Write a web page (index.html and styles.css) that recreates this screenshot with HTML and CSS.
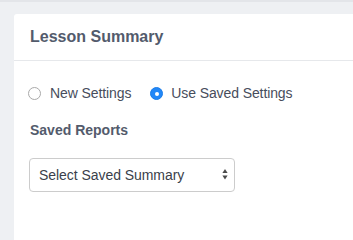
FILE: index.html
```html
<!DOCTYPE html>
<html>
<head>
<meta charset="utf-8">
<link rel="stylesheet" href="styles.css">
</head>
<body>
<div class="topbar"></div>
<div class="card">
  <div class="card-header">
    <h2 class="card-title">Lesson Summary</h2>
  </div>
  <div class="card-body">
    <div class="radio-row">
      <label class="radio-option">
        <span class="radio"></span>
        <span class="radio-label">New Settings</span>
      </label>
      <label class="radio-option">
        <span class="radio radio-checked"></span>
        <span class="radio-label">Use Saved Settings</span>
      </label>
    </div>
    <div class="field-label">Saved Reports</div>
    <div class="select-wrap">
      <div class="select">Select Saved Summary</div>
      <svg class="select-arrows" width="6" height="11" viewBox="0 0 6 11">
        <path d="M3 0 L5.6 4 L0.4 4 Z" fill="#4a4a4a"/>
        <path d="M3 10.5 L5.6 6.5 L0.4 6.5 Z" fill="#4a4a4a"/>
      </svg>
    </div>
  </div>
</div>
</body>
</html>
```

FILE: styles.css
```css
html, body {
  margin: 0;
  padding: 0;
  background: #eef0f3;
  font-family: "Liberation Sans", Arial, sans-serif;
}

html {
  overflow: hidden;
}

.topbar {
  height: 2px;
  background: #e3e5e9;
}

.card {
  margin: 12px 0 0 14px;
  background: #ffffff;
  border-top-left-radius: 3px;
  height: calc(100vh - 14px);
  min-height: 198px;
}

.card-header {
  height: 46px;
  border-bottom: 1px solid #e6e8eb;
  padding-left: 16px;
  display: flex;
  align-items: center;
}

.card-title {
  margin: 0;
  font-size: 16px;
  font-weight: bold;
  line-height: 46px;
  color: #535b6c;
}

.card-body {
  padding: 22px 0 0 16px;
}

.radio-row {
  display: flex;
  align-items: center;
  height: 20px;
}

.radio-option {
  display: flex;
  align-items: center;
  margin-right: 19px;
  font-size: 14px;
  line-height: 20px;
  color: #474d5c;
  letter-spacing: -0.1px;
}

.radio {
  box-sizing: border-box;
  width: 13px;
  height: 13px;
  border-radius: 50%;
  border: 1px solid #a9a9a9;
  background: #ffffff;
  margin-left: -2px;
  margin-right: 9px;
  margin-top: 1px;
  position: relative;
}

.radio-option + .radio-option .radio {
  margin-left: 0;
  margin-right: 8px;
}

.radio-checked {
  background: #2287f7;
  border-color: #1b7de9;
}

.radio-checked::after {
  content: "";
  position: absolute;
  left: 50%;
  top: 50%;
  width: 4px;
  height: 4px;
  margin: -2px 0 0 -2px;
  border-radius: 50%;
  background: #ffffff;
}

.field-label {
  margin-top: 17px;
  font-size: 14px;
  font-weight: bold;
  line-height: 20px;
  color: #535b6c;
}

.select-wrap {
  position: relative;
  width: 206px;
  margin-top: 18px;
  margin-left: -1px;
}

.select {
  box-sizing: border-box;
  height: 34px;
  border: 1px solid #cccccc;
  border-radius: 4px;
  padding-left: 9px;
  font-size: 14px;
  line-height: 32px;
  color: #3a3f4b;
  background: #ffffff;
  letter-spacing: -0.05px;
}

.select-arrows {
  position: absolute;
  right: 7px;
  top: 11px;
}
```
